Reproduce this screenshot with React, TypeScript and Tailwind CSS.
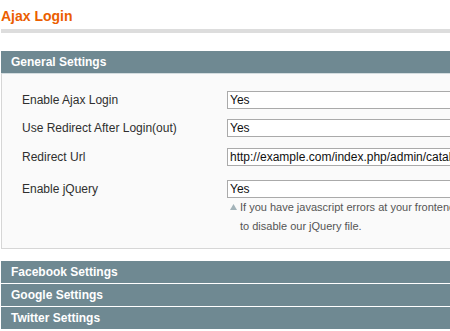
const rows = [
  { label: "Enable Ajax Login", value: "Yes", mt: "mt-[17px]" },
  { label: "Use Redirect After Login(out)", value: "Yes", mt: "mt-[10px]" },
  { label: "Redirect Url", value: "http://example.com/index.php/admin/catalog/", mt: "mt-[11px]" },
  { label: "Enable jQuery", value: "Yes", mt: "mt-[14px]" },
];

function SectionHeader({ title }: { title: string }) {
  return (
    <div className="h-[22px] bg-[#6f8992] pl-[10px] text-[12px] font-bold leading-[22px] text-white">
      {title}
    </div>
  );
}

export default function App() {
  return (
    <div className="h-[331px] w-[450px] overflow-hidden bg-white font-['Liberation_Sans',Arial,sans-serif]">
      <div className="ml-px w-[640px]">
        <h3 className="h-[29px] pt-[7px] text-[14px] font-bold leading-[18px] text-[#eb5e00]">
          Ajax Login
        </h3>
        <div className="h-[4px] bg-[#dddddd]" />

        <div className="mt-[18px]">
          <SectionHeader title="General Settings" />
          <div className="border-x border-b border-t border-[#d6d6d6] border-t-[#d3dcdf] bg-[#fafafa] pb-[12px]">
            {rows.map((r) => (
              <div key={r.label} className={`${r.mt} flex items-center`}>
                <div className="w-[225px] pl-[20px] text-[12px] text-[#2f2f2f]">{r.label}</div>
                <div className="flex h-[18px] w-[300px] items-center overflow-hidden whitespace-nowrap border border-[#aaaaaa] bg-white pl-[2px] text-[12px] text-[#111]">
                  {r.value}
                </div>
              </div>
            ))}
            <div className="ml-[225px] text-[11px] leading-[19px] text-[#555]">
              <div className="flex items-center">
                <svg width="7" height="6" viewBox="0 0 7 6" className="ml-[3px] mr-[3px] mb-[2px]">
                  <path d="M3.5 0 L7 6 L0 6 Z" fill="#a3b3b9" />
                </svg>
                <span className="whitespace-nowrap">
                  If you have javascript errors at your frontend, try to set "No" here
                </span>
              </div>
              <div className="pl-[13px]">to disable our jQuery file.</div>
            </div>
          </div>
        </div>

        <div className="mt-[12px] flex flex-col gap-px">
          <SectionHeader title="Facebook Settings" />
          <SectionHeader title="Google Settings" />
          <SectionHeader title="Twitter Settings" />
        </div>
      </div>
    </div>
  );
}
